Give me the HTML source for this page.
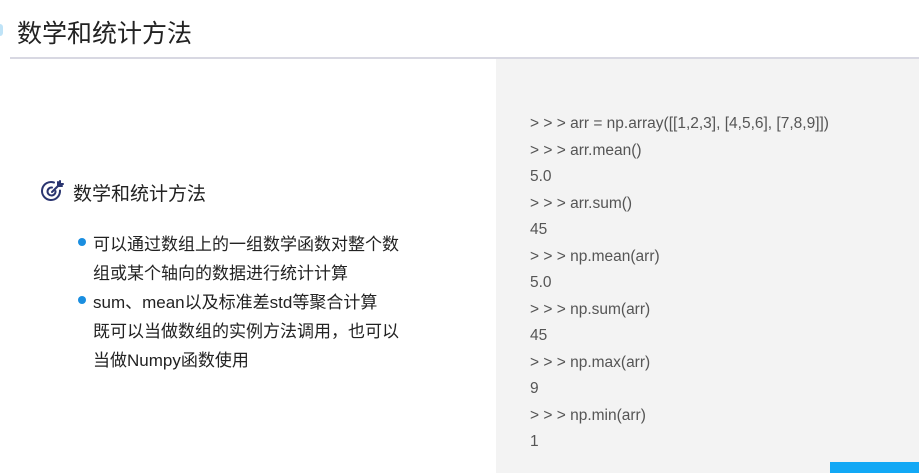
<!DOCTYPE html>
<html><head><meta charset="utf-8"><style>
body{margin:0;width:919px;height:473px;overflow:hidden;background:#fff;position:relative;font-family:"Liberation Sans","Noto Sans CJK SC",sans-serif;}
.t{position:absolute;left:17px;top:14px;font-size:25px;color:#222;}
.hr{position:absolute;left:10px;right:0;top:57px;height:2px;background:#d8d8e2;}
.mark{position:absolute;left:-3px;top:24px;width:6px;height:12px;border-radius:3px;background:#bfe3f7;}
.panel{position:absolute;left:496px;top:59px;right:0;bottom:0;background:#f3f3f3;}
.code{position:absolute;left:530px;top:111px;font-size:15.5px;color:#555;line-height:26.5px;white-space:pre;letter-spacing:0;}
.h{position:absolute;left:73px;top:179px;font-size:19px;color:#222;}
.b{position:absolute;left:93px;font-size:17px;color:#222;}
.dot{position:absolute;left:78px;width:8px;height:8px;border-radius:50%;background:#1a8ee0;}
.bar{position:absolute;left:830px;top:462px;width:89px;height:11px;background:#12a8f5;}
</style></head><body>
<div class="mark"></div>
<div class="t">数学和统计方法</div>
<div class="hr"></div>
<div class="panel"></div>
<div class="code">&gt; &gt; &gt; arr = np.array([[1,2,3], [4,5,6], [7,8,9]])
&gt; &gt; &gt; arr.mean()
5.0
&gt; &gt; &gt; arr.sum()
45
&gt; &gt; &gt; np.mean(arr)
5.0
&gt; &gt; &gt; np.sum(arr)
45
&gt; &gt; &gt; np.max(arr)
9
&gt; &gt; &gt; np.min(arr)
1</div>
<svg style="position:absolute;left:40px;top:179px" width="26" height="26" viewBox="0 0 26 26" fill="none" stroke="#2a3570" stroke-width="2" stroke-linecap="round">
<path d="M20 11.5A9 9 0 1 1 14 3.5"/><path d="M15.5 12A4 4 0 1 1 12 8.5"/><path d="M12 13L20 5"/><path d="M18 3v4h4"/><path d="M20 2v3h3"/></svg>
<div class="h">数学和统计方法</div>
<div class="dot" style="top:238px"></div>
<div class="b" style="top:230px">可以通过数组上的一组数学函数对整个数</div>
<div class="b" style="top:259px">组或某个轴向的数据进行统计计算</div>
<div class="dot" style="top:296px"></div>
<div class="b" style="top:288px">sum、mean以及标准差std等聚合计算</div>
<div class="b" style="top:317px">既可以当做数组的实例方法调用，也可以</div>
<div class="b" style="top:346px">当做Numpy函数使用</div>
<div class="bar"></div>
</body></html>
